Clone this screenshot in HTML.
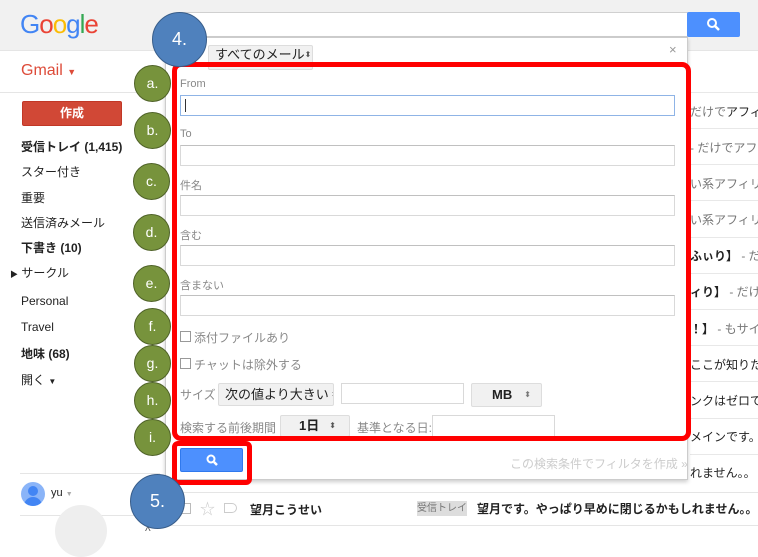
<!DOCTYPE html>
<html><head><meta charset="utf-8"><style>
*{margin:0;padding:0;box-sizing:border-box}
body{width:758px;height:535px;overflow:hidden;background:#fff;font-family:"Liberation Sans","Noto Sans CJK JP",sans-serif;position:relative;font-size:12px;color:#222}
.a{position:absolute}
.hdr{left:0;top:0;width:758px;height:51px;background:#f1f1f1;border-bottom:1px solid #e5e5e5}
.nav{left:21px;font-size:12px;color:#222;white-space:nowrap}
.b{font-weight:bold}
.row{left:690px;width:68px;height:1px;background:#e8e8e8}
.snip{left:690px;white-space:nowrap;font-size:12px;color:#777;overflow:hidden;width:68px}
.lbl{font-size:11px;color:#888;white-space:nowrap}
.inp{left:180px;width:495px;height:21px;border:1px solid #d9d9d9;border-top-color:#c0c0c0;background:#fff}
.sel{background:#f1f1f1;border:1px solid #ddd;border-radius:2px;font-size:13px;line-height:16px;color:#222;white-space:nowrap;display:flex;align-items:center;overflow:hidden}
.g{width:37px;height:37px;border-radius:50%;background:#77933c;border:1.5px solid #4f6228;color:#fff;font-size:14px;text-align:center;line-height:34px}
.bl{width:55px;height:55px;border-radius:50%;background:#4f81bd;border:1.5px solid #385d8a;color:#fff;font-size:18px;text-align:center;line-height:52px}
.cb{width:11px;height:11px;border:1px solid #999;background:#fff}
</style></head><body>
<div class="a hdr"></div>
<div class="a" style="left:20px;top:9px;font-size:26px;font-family:'Liberation Sans',sans-serif;letter-spacing:-1px"><span style="color:#4285f4">G</span><span style="color:#ea4335">o</span><span style="color:#fbbc05">o</span><span style="color:#4285f4">g</span><span style="color:#34a853">l</span><span style="color:#ea4335">e</span></div>
<div class="a" style="left:180px;top:12px;width:508px;height:25px;background:#fff;border:1px solid #d0d0d0"></div>
<div class="a" style="left:687px;top:12px;width:53px;height:25px;background:#4d90fe;border-radius:2px"><svg width="53" height="25"><circle cx="25" cy="11" r="4" stroke="#fff" stroke-width="2" fill="none"/><line x1="28" y1="14" x2="32" y2="18" stroke="#fff" stroke-width="2.5"/></svg></div>

<div class="a" style="left:21px;top:62px;font-size:16px;color:#dd4b39">Gmail <span style="font-size:9px">▼</span></div>
<div class="a" style="left:0;top:92px;width:170px;height:1px;background:#e5e5e5"></div>
<div class="a" style="left:22px;top:101px;width:100px;height:25px;background:#d14836;border:1px solid #c13726;border-radius:2px;color:#fff;font-weight:bold;font-size:12px;text-align:center;line-height:23px">作成</div>
<div class="a nav b" style="top:138px">受信トレイ (1,415)</div>
<div class="a nav" style="top:163px">スター付き</div>
<div class="a nav" style="top:189px">重要</div>
<div class="a nav" style="top:214px">送信済みメール</div>
<div class="a nav b" style="top:239px">下書き (10)</div>
<div class="a nav" style="top:264px;left:10px"><span style="font-size:8px">▶</span> サークル</div>
<div class="a nav" style="top:294px">Personal</div>
<div class="a nav" style="top:320px">Travel</div>
<div class="a nav b" style="top:345px">地味 (68)</div>
<div class="a nav" style="top:371px">開く <span style="font-size:8px">▼</span></div>
<div class="a" style="left:20px;top:473px;width:140px;height:1px;background:#e5e5e5"></div>
<div class="a" style="left:21px;top:482px;width:24px;height:24px;border-radius:50%;background:#8ab4f8;overflow:hidden"><div class="a" style="left:7px;top:4px;width:10px;height:10px;border-radius:50%;background:#4285f4"></div><div class="a" style="left:3px;top:15px;width:18px;height:12px;border-radius:9px 9px 0 0;background:#4285f4"></div></div>
<div class="a" style="left:51px;top:487px;font-size:11px">yu <span style="color:#aaa;font-size:7px">▼</span></div>
<div class="a" style="left:20px;top:515px;width:140px;height:1px;background:#e5e5e5"></div>
<div class="a" style="left:55px;top:505px;width:52px;height:52px;border-radius:50%;background:#eee"></div>

<div class="a row" style="top:92px"></div><div class="a row" style="top:128px"></div><div class="a row" style="top:164px"></div><div class="a row" style="top:200px"></div><div class="a row" style="top:237px"></div><div class="a row" style="top:273px"></div><div class="a row" style="top:309px"></div><div class="a row" style="top:345px"></div><div class="a row" style="top:381px"></div><div class="a row" style="top:418px"></div><div class="a row" style="top:454px"></div>
<div class="a snip" style="top:103px">だけで<b style="color:#222;font-weight:normal">アフィリ</b></div>
<div class="a snip" style="top:139px">- だけでアフィ</div>
<div class="a snip" style="top:175px">い系アフィリ・ケ</div>
<div class="a snip" style="top:211px">い系アフィリ・ケ</div>
<div class="a snip" style="top:247px"><b style="color:#222">ふぃり】</b> - だけ</div>
<div class="a snip" style="top:283px"><b style="color:#222">ィり】</b> - だけでア</div>
<div class="a snip" style="top:320px"><b style="color:#222">！】</b> - もサイト</div>
<div class="a snip" style="top:356px;color:#222">ここが知りたい</div>
<div class="a snip" style="top:392px;color:#222">ンクはゼロで</div>
<div class="a snip" style="top:428px;color:#222">メインです。【地</div>
<div class="a snip" style="top:464px;color:#222">れません。。</div>

<div class="a" style="left:165px;top:37px;width:523px;height:443px;background:#fff;border:1px solid #ccc;box-shadow:0 2px 4px rgba(0,0,0,.2)"></div>
<div class="a" style="left:669px;top:42px;color:#999;font-size:13px">×</div>
<div class="a" style="left:185px;top:52px;color:#888;font-size:12px">検</div>
<div class="a sel" style="left:208px;top:45px;width:105px;height:25px;padding:0 0 6px 6px">すべてのメール <span style="font-size:8px;color:#555">⬍</span></div>

<div class="a lbl" style="left:180px;top:78px">From</div>
<div class="a inp" style="top:95px;border:1px solid #8fb4e6"><div class="a" style="left:4px;top:3px;width:1px;height:13px;background:#333"></div></div>
<div class="a lbl" style="left:180px;top:128px">To</div>
<div class="a inp" style="top:145px"></div>
<div class="a lbl" style="left:180px;top:177px">件名</div>
<div class="a inp" style="top:195px"></div>
<div class="a lbl" style="left:180px;top:227px">含む</div>
<div class="a inp" style="top:245px"></div>
<div class="a lbl" style="left:180px;top:277px">含まない</div>
<div class="a inp" style="top:295px"></div>
<div class="a cb" style="left:180px;top:331px"></div><div class="a lbl" style="left:194px;top:329px;font-size:12px">添付ファイルあり</div>
<div class="a cb" style="left:180px;top:358px"></div><div class="a lbl" style="left:194px;top:356px;font-size:12px">チャットは除外する</div>
<div class="a lbl" style="left:180px;top:386px;font-size:12px">サイズ</div>
<div class="a sel" style="left:218px;top:383px;width:116px;height:23px;padding-left:6px">次の値より大きい <span style="font-size:8px;color:#555;margin-left:2px">⬍</span></div>
<div class="a" style="left:341px;top:383px;width:123px;height:21px;border:1px solid #d9d9d9"></div>
<div class="a sel" style="left:471px;top:383px;width:71px;height:24px;padding-left:20px;font-weight:bold">MB <span style="font-size:8px;color:#777;font-weight:normal;margin-left:12px">⬍</span></div>
<div class="a lbl" style="left:180px;top:419px;font-size:12px">検索する前後期間</div>
<div class="a sel" style="left:280px;top:415px;width:70px;height:22px;padding:0 0 0 18px;font-weight:bold">1日 <span style="font-size:8px;color:#555;font-weight:normal;margin-left:10px">⬍</span></div>
<div class="a lbl" style="left:357px;top:419px;font-size:12px">基準となる日:</div>
<div class="a" style="left:432px;top:415px;width:123px;height:22px;border:1px solid #d9d9d9"></div>
<div class="a" style="left:510px;top:455px;font-size:12px;color:#ccc">この検索条件でフィルタを作成 »</div>

<div class="a" style="left:172px;top:62px;width:519px;height:379px;border:5px solid #f00;border-radius:9px"></div>
<div class="a" style="left:180px;top:448px;width:63px;height:24px;background:#4d90fe;border:1px solid #3079ed;border-radius:2px"><svg width="63" height="24"><circle cx="30" cy="10" r="3.5" stroke="#fff" stroke-width="2" fill="none"/><line x1="33" y1="13" x2="36" y2="16" stroke="#fff" stroke-width="2.5"/></svg></div>
<div class="a" style="left:172px;top:441px;width:80px;height:44px;border:5px solid #f00;border-radius:6px"></div>

<div class="a" style="left:170px;top:492px;width:588px;height:1px;background:#e5e5e5"></div>
<div class="a" style="left:170px;top:525px;width:588px;height:1px;background:#e5e5e5"></div>
<div class="a cb" style="left:180px;top:503px;border-color:#bbb"></div>
<div class="a" style="left:200px;top:498px;color:#ccc;font-size:15px">☆</div>
<div class="a" style="left:224px;top:503px;width:13px;height:10px;border:1px solid #ccc;border-radius:0 5px 5px 0"></div>
<div class="a b" style="left:250px;top:501px;font-size:12px">望月こうせい</div>
<div class="a" style="left:417px;top:501px;width:50px;height:15px;background:#ddd;color:#777;font-size:10px;text-align:center;line-height:15px">受信トレイ</div>
<div class="a b" style="left:477px;top:500px;font-size:12px;white-space:nowrap">望月です。やっぱり早めに閉じるかもしれません。。【地</div>
<div class="a" style="left:145px;top:524px;color:#555;font-size:12px">^</div>

<div class="a g" style="left:134px;top:65px">a.</div>
<div class="a g" style="left:134px;top:112px">b.</div>
<div class="a g" style="left:133px;top:163px">c.</div>
<div class="a g" style="left:133px;top:214px">d.</div>
<div class="a g" style="left:133px;top:265px">e.</div>
<div class="a g" style="left:134px;top:308px">f.</div>
<div class="a g" style="left:134px;top:345px">g.</div>
<div class="a g" style="left:134px;top:382px">h.</div>
<div class="a g" style="left:134px;top:419px">i.</div>
<div class="a bl" style="left:152px;top:12px">4.</div>
<div class="a bl" style="left:130px;top:474px">5.</div>
</body></html>
